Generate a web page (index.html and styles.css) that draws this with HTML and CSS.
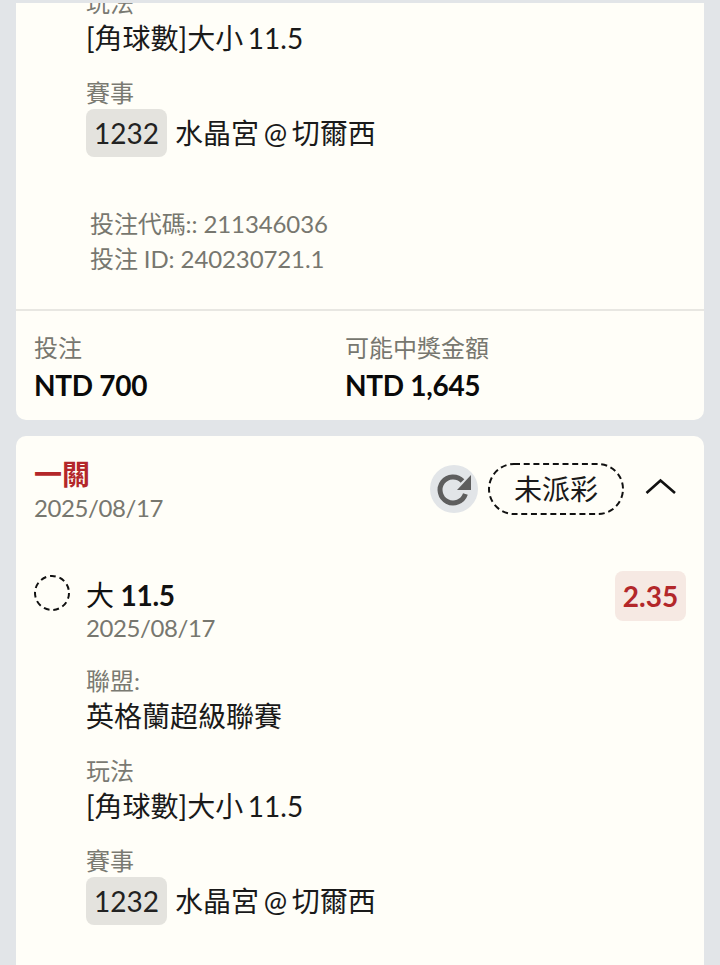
FILE: index.html
```html
<!DOCTYPE html>
<html lang="zh-Hant">
<head>
<meta charset="utf-8">
<title>投注</title>
<link rel="stylesheet" href="styles.css">
</head>
<body>
<main class="page">
  <section class="card card-top">
    <div class="clipped-top">
      <div class="details">
        <div class="field">
          <div class="label">玩法</div>
          <div class="value">[角球數]大小 11.5</div>
        </div>
        <div class="field">
          <div class="label">賽事</div>
          <div class="match"><span class="code">1232</span><span class="value">水晶宮 @ 切爾西</span></div>
        </div>
      </div>
    </div>
    <div class="ids">
      <div>投注代碼:: 211346036</div>
      <div>投注 ID: 240230721.1</div>
    </div>
    <div class="totals">
      <div class="total">
        <div class="total-label">投注</div>
        <div class="total-value">NTD 700</div>
      </div>
      <div class="total">
        <div class="total-label">可能中獎金額</div>
        <div class="total-value">NTD 1,645</div>
      </div>
    </div>
  </section>

  <section class="card card-bottom">
    <header class="head">
      <div>
        <div class="title">一關</div>
        <div class="date">2025/08/17</div>
      </div>
      <div class="actions">
        <span class="refresh">
          <svg width="48" height="48" viewBox="0 0 48 48" aria-hidden="true">
            <path class="refresh-arc" d="M35.4 29A13 13 0 1 1 32.5 16"/>
            <path class="refresh-head" d="M41 10V25H27z"/>
          </svg>
        </span>
        <span class="status">未派彩
          <svg class="status-ring" width="136" height="52" viewBox="0 0 136 52" aria-hidden="true">
            <rect x="1" y="1" width="134" height="50" rx="25" ry="25"/>
          </svg>
        </span>
        <svg class="chevron" width="34" height="22" viewBox="0 0 34 22" aria-hidden="true">
          <path d="M3.5 17L17.5 4.5 32 17"/>
        </svg>
      </div>
    </header>
    <div class="selection">
      <svg class="pending" width="36" height="36" viewBox="0 0 36 36" aria-hidden="true">
        <circle cx="18" cy="18" r="17"/>
      </svg>
      <div class="selection-body">
        <div class="selection-top">
          <div>
            <div class="pick">大 <b>11.5</b></div>
            <div class="date">2025/08/17</div>
          </div>
          <span class="odds">2.35</span>
        </div>
        <div class="details">
          <div class="field">
            <div class="label">聯盟:</div>
            <div class="value">英格蘭超級聯賽</div>
          </div>
          <div class="field">
            <div class="label">玩法</div>
            <div class="value">[角球數]大小 11.5</div>
          </div>
          <div class="field">
            <div class="label">賽事</div>
            <div class="match"><span class="code">1232</span><span class="value">水晶宮 @ 切爾西</span></div>
          </div>
        </div>
      </div>
    </div>
  </section>
</main>
</body>
</html>
```

FILE: styles.css
```css
* { box-sizing: border-box; }
html, body { margin: 0; height: 100%; }
body {
  background: #e2e5e8;
  font-family: Lato, "Noto Sans CJK TC", sans-serif;
  color: #111;
  overflow: hidden;
}
.page {
  height: 965px;
  overflow: hidden;
  padding: 3px 16px 0;
  display: flex;
  flex-direction: column;
  gap: 16px;
}
.card {
  background: #fffef8;
  border-radius: 10px;
  flex: none;
}
.card-top {
  border-radius: 0 0 10px 10px;
  height: 417px;
  display: flex;
  flex-direction: column;
}
.clipped-top {
  height: 154px;
  overflow: hidden;
  position: relative;
}
.clipped-top .details {
  position: absolute;
  left: 70px;
  top: -15px;
}
.details { display: flex; flex-direction: column; gap: 20px; }
.label {
  font-size: 24px;
  line-height: 30px;
  color: #7a7a72;
}
.value {
  font-size: 28px;
  line-height: 40px;
  color: #1a1a1a;
  word-spacing: -2.5px;
}
.match { display: flex; align-items: center; gap: 8px; height: 48px; margin-top: 1px; }
.code {
  background: #e4e3de;
  border-radius: 8px;
  width: 81px;
  height: 48px;
  font-size: 28px;
  line-height: 48px;
  text-align: center;
  color: #222;
}
.ids {
  margin: 49px 0 0 74px;
  font-size: 24px;
  line-height: 35px;
  letter-spacing: -0.1px;
  color: #77776f;
  height: 103px;
}
.totals {
  flex: 1;
  border-top: 2px solid #e8e7e2;
  display: grid;
  grid-template-columns: 311px 1fr;
  padding: 21px 18px 0;
}
.total-label { font-size: 24px; line-height: 32px; color: #77776f; }
.total-value {
  margin-top: 2px;
  font-size: 28px;
  line-height: 38px;
  font-weight: 700;
  color: #0a0a0a;
  letter-spacing: -0.3px;
}
.card-bottom { height: 560px; padding: 21px 18px 0; }
.head { display: flex; justify-content: space-between; align-items: flex-start; }
.title {
  font-size: 28px;
  line-height: 35px;
  font-weight: 700;
  color: #b3272a;
}
.date { font-size: 24px; line-height: 32px; color: #77776f; letter-spacing: -0.4px; }
.actions {
  display: flex;
  align-items: center;
  gap: 10px;
  margin: 6px 9px 0 0;
}
.refresh {
  width: 48px;
  height: 48px;
  border-radius: 50%;
  background: #e2e5e8;
  display: block;
}
.refresh svg { display: block; }
.refresh-arc { fill: none; stroke: #5e5e5e; stroke-width: 5; }
.refresh-head { fill: #5e5e5e; }
.status {
  position: relative;
  width: 136px;
  height: 52px;
  font-size: 28px;
  line-height: 52px;
  text-align: center;
  color: #1a1a1a;
}
.status-ring { position: absolute; left: 0; top: 0; }
.status-ring rect { fill: none; stroke: #111; stroke-width: 2; stroke-dasharray: 6 3.7; }
.chevron { margin: -4px 0 0 9px; }
.chevron path { fill: none; stroke: #111; stroke-width: 2.6; }
.selection { display: flex; gap: 16px; margin-top: 47px; }
.pending { flex: none; margin-top: 4px; }
.pending circle { fill: none; stroke: #111; stroke-width: 2; stroke-dasharray: 5.8 3.9; }
.selection-body { flex: 1; }
.selection-top { display: flex; justify-content: space-between; align-items: flex-start; margin-bottom: 23px; }
.pick { font-size: 28px; line-height: 36px; color: #111; margin-top: 6px; letter-spacing: -0.3px; }
.pick b { font-weight: 700; }
.selection-top .date { line-height: 30px; }
.odds {
  background: #f6e9e3;
  color: #b3272a;
  border-radius: 8px;
  width: 71px;
  height: 50px;
  font-size: 28px;
  font-weight: 700;
  line-height: 50px;
  text-align: center;
}
```
